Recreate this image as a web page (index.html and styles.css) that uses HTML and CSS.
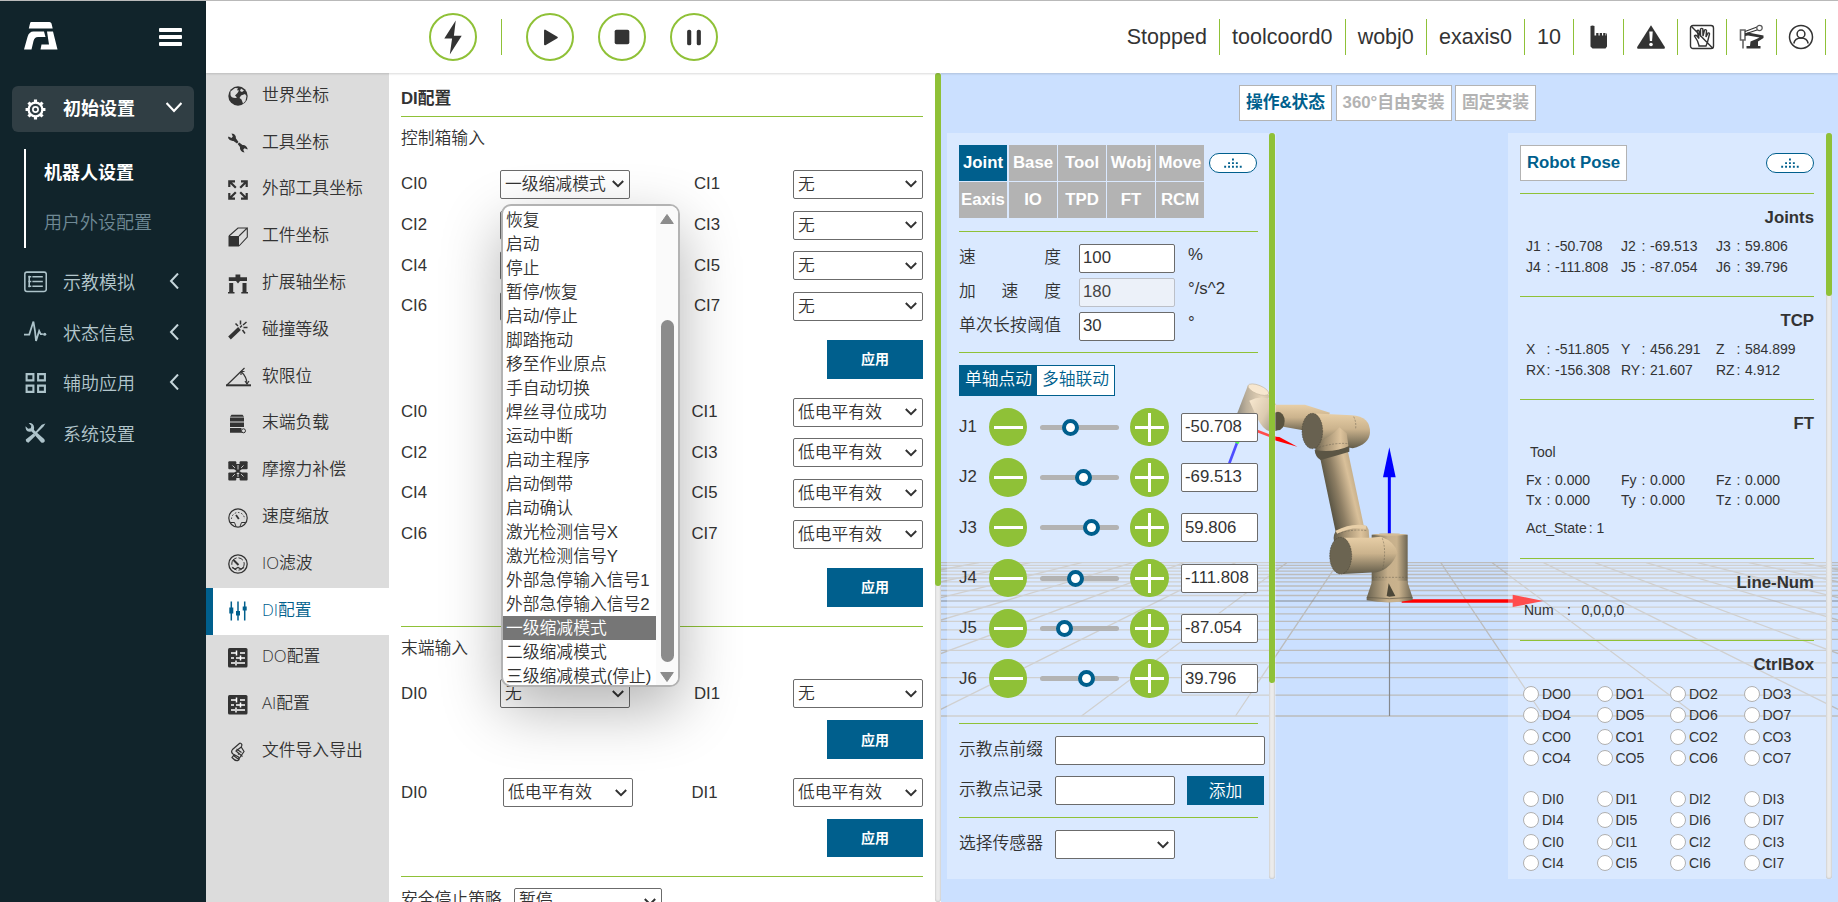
FILE: index.html
```html
<!DOCTYPE html>
<html lang="zh-CN">
<head>
<meta charset="utf-8">
<title>机器人控制</title>
<link rel="stylesheet" href="styles.css">
</head>
<body>
<div class="app">
  <aside class="sidebar">
    <div class="brand">
      <svg class="logo" viewBox="0 0 34 28"><path fill="#fff" d="M7 0h18.500q1.500 0 2 1.500l1.200 5H4.800L6 1.500Q6.200 0 7 0ZM0 27.500 3.500 15q1.500-5.500 6-5.500H20l1.500 5.500h-7.500q-3.500 0-4.500 4L7.500 27.500ZM23 9.500h6L33.500 27.500H16.500l1-5H25Z"/></svg>
      <span class="burger"><i></i><i></i><i></i></span>
    </div>
    <div class="nav-item nav-active">
      <svg class="nav-ic" viewBox="0 0 22 22" fill="none" stroke="#fff"><circle cx="11" cy="11" r="6.600" stroke-width="2.200"/><circle cx="11" cy="11" r="2.500" stroke-width="1.600"/><g stroke-width="3"><path d="M11 1.500v3M11 17.500v3M1.500 11h3M17.500 11h3M4.300 4.300l2 2M15.700 15.700l2 2M17.700 4.300l-2 2M6.300 15.700l-2 2"/></g></svg>
      <span>初始设置</span>
      <svg class="arrow" viewBox="0 0 16 16" fill="none" stroke="#fff" stroke-width="2.200"><path d="M.5 3l7.500 8L15.500 3"/></svg>
    </div>
    <div class="subnav">
      <div class="sub-on">机器人设置</div>
      <div>用户外设配置</div>
    </div>
    <div class="nav-item">
      <svg class="nav-ic" viewBox="0 0 22 22" fill="none" stroke="#adc3ca" stroke-width="1.500"><rect x="0.800" y="2" width="20.500" height="18.500" rx="2"/><path d="M4 6.500h3M8 6.500h10M4 11h3M8 11h10M4 15.500h3M8 15.500h10M5 5.500v11"/></svg>
      <span>示教模拟</span>
      <svg class="arrow" viewBox="0 0 16 16" fill="none" stroke="#c6d6db" stroke-width="2"><path d="M12 .5 5 8l7 7.500"/></svg>
    </div>
    <div class="nav-item">
      <svg class="nav-ic" viewBox="0 0 22 22" fill="none" stroke="#adc3ca" stroke-width="1.700"><path d="M0 14h5l3-9.500 1-3 1.500 9L11.500 20l3-9.500 1.500 3h2"/><circle cx="19.800" cy="13.600" r="1.500" fill="#adc3ca" stroke="none"/></svg>
      <span>状态信息</span>
      <svg class="arrow" viewBox="0 0 16 16" fill="none" stroke="#c6d6db" stroke-width="2"><path d="M12 .5 5 8l7 7.500"/></svg>
    </div>
    <div class="nav-item">
      <svg class="nav-ic" viewBox="0 0 22 22" fill="none" stroke="#adc3ca" stroke-width="2"><path d="M2.500 3h6.500v6H2.500zM13.500 3H20v6h-6.500zM2.500 14h6.500v6H2.500zM13.500 14H20v6h-6.500z"/></svg>
      <span>辅助应用</span>
      <svg class="arrow" viewBox="0 0 16 16" fill="none" stroke="#c6d6db" stroke-width="2"><path d="M12 .5 5 8l7 7.500"/></svg>
    </div>
    <div class="nav-item">
      <svg class="nav-ic" viewBox="0 0 22 22"><g fill="#adc3ca"><path d="M4.500 2 7 4.500 6.500 7 4 7.500 1.500 5Q1 9.500 5 10.300L7.300 10 16.500 20.500Q18.500 21.500 19.800 19.500 20.300 18 19 17L9.500 8.500Q10.500 3.500 6.500 2Z"/><path d="M20.500 2.500 17 3.500 10.500 11l1.200 1.200 7-7ZM9 12 1.700 17.800Q1.700 20.500 4.200 20.700L11 14Z"/></g></svg>
      <span>系统设置</span>
    </div>
  </aside>

  <div class="right">
    <header class="topbar">
      <div class="controls">
        <span class="round"><svg viewBox="0 0 48 48"><path fill="#333" d="M27 6 14.500 25.500H23L20.500 43 33.500 22.500H25Z"/></svg></span>
        <i class="vsep"></i>
        <span class="round"><svg viewBox="0 0 48 48"><path fill="#333" stroke="#333" stroke-width="2" stroke-linejoin="round" d="M18.500 17v15L31.500 24.500Z"/></svg></span>
        <span class="round"><svg viewBox="0 0 48 48"><rect x="16" y="16" width="16" height="16" rx="2" fill="#333"/></svg></span>
        <span class="round"><svg viewBox="0 0 48 48"><rect x="16.500" y="16" width="4.500" height="17" rx="2" fill="#333"/><rect x="27" y="16" width="4.500" height="17" rx="2" fill="#333"/></svg></span>
      </div>
      <div class="status">
        <span>Stopped</span><span>toolcoord0</span><span>wobj0</span><span>exaxis0</span><span>10</span>
        <span class="st-ic w1"><svg viewBox="0 0 26 26"><path fill="#333" d="M4.500 2Q6.500.8 8.500 2v9.500h1.700V9h2.300v2.500h1.200V9h2.300v2.500h1.200V9h2.300v2.500h.7V9.500h.8V22.500l-1.500 2H6.500l-2-2Z"/></svg></span>
        <span class="st-ic w2"><svg viewBox="0 0 30 26"><path fill="#333" d="M15 1.200 28.800 23q.6 1.500-.8 1.700H2Q.6 24.500 1.200 23Z"/><path fill="#fff" d="M13.300 7.500h3.400l-.6 9.500h-2.200Z"/><circle cx="15" cy="20.500" r="1.800" fill="#fff"/></svg></span>
        <span class="st-ic w3"><svg viewBox="0 0 26 26" fill="none" stroke="#333" stroke-width="1.400"><rect x="1.500" y="1.500" width="23" height="23" rx="2.500"/><path d="M2 2 24 24.500M10 21.500 8.500 17 5.500 12q1-1.500 2.500 0l2 2.500-2-7.500q1-1.500 2 0l1.500 5.500V5q1.300-1.300 2.300 0l.2 7L15.500 6q1.300-1 2 .5L17 13l2-4q1.700-.5 1.500 1L18.500 18l-1.500 4H10Z"/></svg></span>
        <span class="st-ic w3"><svg viewBox="0 0 26 26"><path d="M1.500 6H6v10H1.500zM4 16v8.500" fill="none" stroke="#666" stroke-width="1.600"/><path d="M6 7.500 18 3M6 10l12-4" fill="none" stroke="#333" stroke-width="1.200"/><circle cx="20.500" cy="4" r="2.700" fill="#fff" stroke="#555" stroke-width="1.200"/><path fill="#333" d="M6 9.500 9 8.500l15.500 3V14L19 17.500V22h2.500v2.500H7.500V22h3.500l.5-4.500 6-2.500 3-1.500L9 11.500 6 12Z"/></svg></span>
        <span class="st-ic w3"><svg viewBox="0 0 26 26" fill="none" stroke="#333" stroke-width="1.500"><circle cx="13" cy="13" r="11.500"/><circle cx="13" cy="10" r="3.900"/><path d="M5.800 19.500q1-5.500 7.200-5.500t7.200 5.500"/></svg></span>
      </div>
    </header>

    <div class="body">
      <nav class="menu">
        <div><svg viewBox="0 0 20 20"><circle cx="10" cy="10" r="9.700" fill="#333"/><path fill="#dcdcdc" d="M2.500 5.500 7 2l3 .3-1 2 2 .2-1.500 2.500L7 9.500l2 2-1.500.5Q3 12 2.500 9ZM13 9.500l4-1.500 1.500 2-1 5-2.500 2.500-1.500-4-2-1.500ZM13 2.500l3 2-2 1.500-2-1Z"/></svg><span>世界坐标</span></div>
        <div><svg viewBox="0 0 20 20"><path fill="#333" d="M3.500.5 6 1Q8.500 3 8 5.500L10.500 9 9 10.500 5.500 8Q2 8.500 0 5L.5 3.500l3 1.500 1.300-1.500ZM16.500 19.500l-2-.5Q11.500 17 12 14L9.700 11 11.200 9.500l3.300 2.500Q18 11.500 19.500 15.500v1l-3-1.300-1.300 1.500Z"/></svg><span>工具坐标</span></div>
        <div><svg viewBox="0 0 20 20" fill="none" stroke="#333" stroke-width="2.200"><path d="M1.300 7V1.300H7M13 1.300h5.700V7M18.700 13v5.700H13M7 18.700H1.300V13M1.500 1.500l6.300 6.300M18.500 1.500l-6.300 6.300M18.500 18.500l-6.300-6.300M1.500 18.500l6.300-6.300"/></svg><span>外部工具坐标</span></div>
        <div><svg viewBox="0 0 20 20"><rect x=".5" y="9" width="10.500" height="10.500" fill="#333"/><path fill="none" stroke="#333" stroke-width="1.100" d="M1 9 10 1h9.300L11 9M19.300 1v9L11 19"/></svg><span>工件坐标</span></div>
        <div><svg viewBox="0 0 20 20"><path fill="#333" d="M.8 3.200H7.500V.5h4.800V3.200H19V7H12L10 9.500 8 7H.8ZM1.200 9h4v9H6.500v1.500H0V18h1.200ZM14.500 9h4v9H20v1.500H13.300V18h1.200Z"/></svg><span>扩展轴坐标</span></div>
        <div><svg viewBox="0 0 20 20" stroke="#333" fill="none"><path stroke-width="3.800" d="M1.500 18 11.500 8.500"/><path stroke-width="1.500" d="M12 7.500l2-2M12.500.5v4M7.500 3.500l2.500 2.500M15.500 7.500h4M18.500 2 15 5M14.500 10l2.500 3.500"/></svg><span>碰撞等级</span></div>
        <div><svg class="wide" viewBox="0 0 25 20" fill="none" stroke="#333" stroke-width="1.200"><path d="M1 18 18.500 1M15 4.500Q21 10 21 17"/><path stroke-width="2" d="M0 18.300h25"/><path d="M15 8v-3.500h3.500M19 14l2 3 2-3"/></svg><span>软限位</span></div>
        <div><svg viewBox="0 0 20 20"><path fill="#333" d="M3.500.8h11l1.500 2H2ZM2 3.500h14v4H2ZM2 8.500h14v4.500H2ZM2 14h11.500v3.500H16L15 18.800H2Z"/><circle cx="15.500" cy="16.800" r="2" fill="#dcdcdc" stroke="#333"/></svg><span>末端负载</span></div>
        <div><svg viewBox="0 0 20 20"><g fill="#333"><rect width="8" height="8" x=".3" y=".3" rx="1"/><rect width="8" height="8" x="11.600" y=".3" rx="1"/><rect width="8" height="8" x=".3" y="11.600" rx="1"/><rect width="8" height="8" x="11.600" y="11.600" rx="1"/><path d="M7 3h6v5H7zM7 13h6v4H7z"/></g><path d="M4.500 4.500l11 11M15.500 4.500l-11 11M10 4v12" stroke="#dcdcdc" stroke-width=".9"/><path d="M6.500 7l7 6M13.500 7l-7 6" stroke="#333" stroke-width="2.200"/></svg><span>摩擦力补偿</span></div>
        <div><svg viewBox="0 0 20 20" fill="none" stroke="#333"><circle cx="10" cy="10" r="9.200" stroke-width="1.200"/><path stroke-dasharray="1.500 1.800" d="M3.500 11a6.500 6.500 0 0 1 13 0"/><path d="M2.500 14.500h4l1.500 4M17.500 14.500h-4l-1.500 4"/><path stroke-width="1.800" d="M8 7l2.800 4"/></svg><span>速度缩放</span></div>
        <div><svg viewBox="0 0 20 20" fill="none" stroke="#333"><circle cx="10" cy="10" r="9.200" stroke-width="1.300"/><circle cx="10" cy="10" r="6.200" stroke-dasharray="9 2 5 2"/><path stroke-width="1.200" d="M4 13.500l3 1.500 3-1.500 3 1.500 3-1.500"/><path stroke-width="2" d="M5.500 6l5 5"/></svg><span>IO滤波</span></div>
        <div class="menu-on"><svg viewBox="0 0 20 20" stroke="#005f8d" fill="none"><path stroke-width="1.500" d="M3.300.5v19M10 .5v19M16.700.5v19"/><path stroke-width="4" d="M3.300 6.500v6M10 10v4.500M16.700 5.500v4"/></svg><span>DI配置</span></div>
        <div><svg viewBox="0 0 20 20"><rect width="19.500" height="19.500" rx="1.500" fill="#333"/><path stroke="#fff" stroke-width="1.500" fill="none" d="M3 5h6M12 5h5M8.500 2.500v5M3 10h3M8 10h9M12.500 7.500v5M3 15h4M9 15h8M8 12.500v5"/></svg><span>DO配置</span></div>
        <div><svg viewBox="0 0 20 20"><rect width="19.500" height="19.500" rx="1.500" fill="#333"/><path stroke="#fff" stroke-width="1.500" fill="none" d="M3 5h6M12 5h5M8.500 2.500v5M3 10h3M8 10h9M12.500 7.500v5M3 15h4M9 15h8M8 12.500v5"/></svg><span>AI配置</span></div>
        <div><svg viewBox="0 0 20 20" fill="none" stroke="#333" stroke-width="1.200"><path d="M12 1 4.500 7.500q-2 2.500.5 4.500l5.500 3q1.500 2-.5 3.500-2.500 1-6-3l1.500-2 6 4.500M12 1q3 1 1.200 4L8 9l6.500 5.500M13.200 5 16 9.500 10.500 17.500M8.500 7l5 3.500M10 12.500l1.500-1.500"/></svg><span>文件导入导出</span></div>
      </nav>

      <main class="content">
        <h2>DI配置</h2>
        <div class="caption">控制箱输入</div>
        <div class="rows">
          <div class="row"><label>CI0</label><select><option>一级缩减模式</option></select><label>CI1</label><select><option>无</option></select></div>
          <div class="row"><label>CI2</label><select><option>无</option></select><label>CI3</label><select><option>无</option></select></div>
          <div class="row"><label>CI4</label><select><option>无</option></select><label>CI5</label><select><option>无</option></select></div>
          <div class="row"><label>CI6</label><select><option>无</option></select><label>CI7</label><select><option>无</option></select></div>
        </div>
        <button class="apply">应用</button>
        <div class="rows rows-level">
          <div class="row"><label>CI0</label><select><option>低电平有效</option></select><label>CI1</label><select><option>低电平有效</option></select></div>
          <div class="row"><label>CI2</label><select><option>低电平有效</option></select><label>CI3</label><select><option>低电平有效</option></select></div>
          <div class="row"><label>CI4</label><select><option>低电平有效</option></select><label>CI5</label><select><option>低电平有效</option></select></div>
          <div class="row"><label>CI6</label><select><option>低电平有效</option></select><label>CI7</label><select><option>低电平有效</option></select></div>
        </div>
        <button class="apply">应用</button>
        <hr>
        <div class="caption">末端输入</div>
        <div class="rows">
          <div class="row"><label>DI0</label><select><option>无</option></select><label>DI1</label><select><option>无</option></select></div>
        </div>
        <button class="apply near">应用</button>
        <div class="rows rows-level">
          <div class="row"><label>DI0</label><select><option>低电平有效</option></select><label>DI1</label><select><option>低电平有效</option></select></div>
        </div>
        <button class="apply near last">应用</button>
        <hr>
        <div class="strategy"><label>安全停止策略</label><select><option>暂停</option></select></div>
      </main>
      <div class="scroll scroll-main"><i></i></div>

      <section class="view">
        <svg class="scene" viewBox="941 73 897 829">
          <defs>
            <linearGradient id="gh" x1="0" x2="1"><stop offset="0" stop-color="#5d5848"/><stop offset=".3" stop-color="#a08e70"/><stop offset=".75" stop-color="#ddc39c"/><stop offset="1" stop-color="#bba582"/></linearGradient>
            <linearGradient id="gb" x1="0" x2="1"><stop offset="0" stop-color="#6a6350"/><stop offset=".45" stop-color="#c7b08c"/><stop offset=".7" stop-color="#c9b28d"/><stop offset="1" stop-color="#6d6552"/></linearGradient>
            <linearGradient id="gv" x1="0" y1="0" x2="0" y2="1"><stop offset="0" stop-color="#e8cfa7"/><stop offset=".45" stop-color="#cbb38d"/><stop offset="1" stop-color="#625c4a"/></linearGradient>
            <linearGradient id="gd" x1="0" y1=".1" x2="1" y2=".6"><stop offset="0" stop-color="#f3dcb8"/><stop offset=".5" stop-color="#cdb590"/><stop offset="1" stop-color="#585342"/></linearGradient>
            <linearGradient id="gu" gradientUnits="userSpaceOnUse" x1="322" y1="375" x2="412" y2="353"><stop offset="0" stop-color="#5a5544"/><stop offset=".35" stop-color="#8c7d63"/><stop offset=".8" stop-color="#d9c09a"/><stop offset="1" stop-color="#c3ac87"/></linearGradient>
          </defs>
          <g fill="none" stroke="#bcbcbc" stroke-width="1.300">
            <path d="M941 716H1838M941 695.100H1838M941 677.700H1838M941 662.900H1838M941 650.300H1838M941 639.300H1838M941 629.800H1838M941 621.300H1838M941 613.800H1838M941 607.100H1838M941 595.500H1838M941 590.500H1838M941 586H1838M941 581.800H1838M941 578H1838M941 574.500H1838M941 571.200H1838M941 568.100H1838M941 565.300H1838M941 562.700H1838"/>
            <path d="M1543.500 716 1440.800 562.700M1697.500 716 1492.200 562.700M1851.500 716 1543.500 562.700M2005.500 716 1594.800 562.700M2159.500 716 1646.200 562.700M2313.500 716 1697.500 562.700M2467.500 716 1748.800 562.700M2621.500 716 1800.200 562.700M1235.500 716 1338.200 562.700M1081.500 716 1286.800 562.700M927.500 716 1235.500 562.700M773.500 716 1184.200 562.700M619.500 716 1132.800 562.700M465.500 716 1081.500 562.700M311.500 716 1030.200 562.700M157.500 716 978.800 562.700"/>
          </g>
          <path d="M941 601H1838M1389.500 601V716" stroke="#85898f" stroke-width="1.200"/>
          <g transform="translate(1220 370) scale(.33333)">
            <path d="M545 693H880" stroke="#f00" stroke-width="10"/><path fill="#f00" d="M878 674 970 693 878 711Z"/>
            <path d="M508 500V318" stroke="#00f" stroke-width="9"/><path fill="#00f" d="M508 232 527 322H489Z"/>
            <path d="M90 175 175 207" stroke="#f00" stroke-width="8"/><path fill="#f00" d="M164 200 178 201 232 230 164 211Z"/>
            <path d="M52 216 28 280" stroke="#00f" stroke-width="8"/><path d="M58 206 50 220" stroke="#0f0" stroke-width="11"/>
            <path fill="url(#gh)" d="M84 46 50 134 115 150 150 76Z"/>
            <path fill="url(#gd)" d="M88 92Q135 70 165 100L197 150Q185 188 148 184Q128 178 112 145Z"/>
            <ellipse cx="115" cy="59" rx="33" ry="13" transform="rotate(22 115 59)" fill="#f4ddba" stroke="#b09a78" stroke-width="2"/>
            <path fill="url(#gv)" d="M150 104H255L330 128 300 190 190 170Z"/>
            <ellipse cx="174" cy="153" rx="20" ry="28" fill="#59533f"/>
            <path fill="url(#gv)" d="M272 130 395 136Q452 140 450 188Q448 222 398 235L290 215Z"/>
            <path fill="url(#gh)" d="M284 222Q335 200 358 172L380 190 387 240Q340 272 288 254Z"/>
            <ellipse cx="277" cy="183" rx="31" ry="53" fill="#686150" stroke="#413d31" stroke-width="1.500" stroke-dasharray="5 3"/>
            <path fill="url(#gu)" d="M300 262Q345 245 384 245L432 470 432 520 350 500Z"/>
            <path fill="#5b5544" d="M284 240Q340 250 388 228V245Q345 258 302 270 286 262 284 240Z"/>
            <path d="M297 232Q345 217 386 221" fill="none" stroke="#665e4c" stroke-width="1.500" stroke-dasharray="6 4"/>
            <path d="M401 140q8 15 6 35" fill="none" stroke="#665e4c" stroke-width="1.500" stroke-dasharray="6 4"/>
            <path fill="url(#gh)" d="M346 485Q395 457 440 468L446 480 450 535 350 535Q338 510 342 495Z"/>
            <path fill="none" stroke="#e8cfa8" stroke-width="10" d="M349 487Q395 463 438 472"/>
            <path d="M345 495Q390 475 440 482" fill="none" stroke="#665e4c" stroke-width="1.500" stroke-dasharray="6 4"/>
            <path fill="url(#gb)" d="M455 494Q508 487 563 494V640H455Z"/>
            <path fill="#d5bd97" d="M455 494Q508 487 563 494 508 501 455 494Z"/>
            <path fill="url(#gv)" d="M365 503H450L483 500Q525 515 532 548 515 595 470 607L368 612Z"/>
            <path d="M487 505Q500 540 488 598" fill="none" stroke="#665e4c" stroke-width="1.500" stroke-dasharray="6 4"/>
            <ellipse cx="362" cy="557" rx="33" ry="55" fill="#6b6451" stroke="#413d31" stroke-width="1.500" stroke-dasharray="5 3"/>
            <path fill="url(#gb)" d="M457 632H561L578 683V690Q508 704 440 691V683Z"/>
            <path d="M456 622H562" stroke="#665e4c" stroke-width="1.500" stroke-dasharray="6 4"/>
            <path d="M440 682Q508 690 578 682" stroke="#625b48" stroke-width="2" fill="none"/>
            <path fill="#4c4738" d="M506 640 526 678 508 680 500 678Z"/>
          </g>
        </svg>

        <div class="tabs"><b class="tab tab-on">操作&amp;状态</b><b class="tab tab-free">360°自由安装</b><b class="tab tab-fix">固定安装</b></div>

        <div class="panels">
          <div class="panel joint">
            <div class="joint-body">
              <div class="modes">
                <div class="mode-grid">
                  <b class="on">Joint</b><b>Base</b><b>Tool</b><b>Wobj</b><b>Move</b>
                  <b>Eaxis</b><b>IO</b><b>TPD</b><b>FT</b><b>RCM</b>
                </div>
                <span class="pill"><svg viewBox="0 0 18 10"><path stroke="#005f8d" stroke-width="1.900" stroke-dasharray="1.900 2" d="M.2 8.800H18M4.100 5.100H14M8 1.500h1.900"/></svg></span>
              </div>
              <hr>
              <div class="params">
                <label>速度</label><input value="100"><span>%</span>
                <label>加速度</label><input value="180" disabled><span>°/s^2</span>
                <label>单次长按阈值</label><input value="30"><span>°</span>
              </div>
              <hr class="hr2">
              <div class="seg"><span class="seg-on">单轴点动</span><span>多轴联动</span></div>
              <div class="joints">
                <div class="j"><label>J1</label><i class="minus"></i><span class="track"><i style="left:30.500px"></i></span><i class="plus"></i><input value="-50.708"></div>
                <div class="j"><label>J2</label><i class="minus"></i><span class="track"><i style="left:43.300px"></i></span><i class="plus"></i><input value="-69.513"></div>
                <div class="j"><label>J3</label><i class="minus"></i><span class="track"><i style="left:51.500px"></i></span><i class="plus"></i><input value="59.806"></div>
                <div class="j"><label>J4</label><i class="minus"></i><span class="track"><i style="left:35.300px"></i></span><i class="plus"></i><input value="-111.808"></div>
                <div class="j"><label>J5</label><i class="minus"></i><span class="track"><i style="left:24.500px"></i></span><i class="plus"></i><input value="-87.054"></div>
                <div class="j"><label>J6</label><i class="minus"></i><span class="track"><i style="left:46.500px"></i></span><i class="plus"></i><input value="39.796"></div>
              </div>
              <hr class="hr3">
              <div class="teach"><label>示教点前缀</label><input class="long"></div>
              <div class="teach teach2"><label>示教点记录</label><input><button class="add">添加</button></div>
              <hr class="hr4">
              <div class="teach"><label>选择传感器</label><select><option></option></select></div>
            </div>
            <div class="scroll scroll-joint"><i></i></div>
          </div>

          <div class="panel pose">
            <div class="pose-body">
              <div class="pose-head"><b class="pose-btn">Robot Pose</b><span class="pill"><svg viewBox="0 0 18 10"><path stroke="#005f8d" stroke-width="1.900" stroke-dasharray="1.900 2" d="M.2 8.800H18M4.100 5.100H14M8 1.500h1.900"/></svg></span></div>
              <section class="blk">
                <h3>Joints</h3>
                <div class="vals"><i>J1</i><i>:</i><i>-50.708</i><i>J2</i><i>:</i><i>-69.513</i><i>J3</i><i>:</i><i>59.806</i><i>J4</i><i>:</i><i>-111.808</i><i>J5</i><i>:</i><i>-87.054</i><i>J6</i><i>:</i><i>39.796</i></div>
              </section>
              <section class="blk">
                <h3>TCP</h3>
                <div class="vals"><i>X</i><i>:</i><i>-511.805</i><i>Y</i><i>:</i><i>456.291</i><i>Z</i><i>:</i><i>584.899</i><i>RX</i><i>:</i><i>-156.308</i><i>RY</i><i>:</i><i>21.607</i><i>RZ</i><i>:</i><i>4.912</i></div>
              </section>
              <section class="blk blk-ft">
                <h3>FT</h3>
                <div class="tool">Tool</div>
                <div class="vals"><i>Fx</i><i>:</i><i>0.000</i><i>Fy</i><i>:</i><i>0.000</i><i>Fz</i><i>:</i><i>0.000</i><i>Tx</i><i>:</i><i>0.000</i><i>Ty</i><i>:</i><i>0.000</i><i>Tz</i><i>:</i><i>0.000</i></div>
                <div class="act">Act_State<span>:</span>1</div>
              </section>
              <section class="blk blk-line">
                <h3>Line-Num</h3>
                <div class="num"><i>Num</i><i>:</i><i>0,0,0,0</i></div>
              </section>
              <section class="blk blk-box">
                <h3>CtrlBox</h3>
                <div class="leds">
                  <span>DO0</span><span>DO1</span><span>DO2</span><span>DO3</span>
                  <span>DO4</span><span>DO5</span><span>DO6</span><span>DO7</span>
                  <span>CO0</span><span>CO1</span><span>CO2</span><span>CO3</span>
                  <span>CO4</span><span>CO5</span><span>CO6</span><span>CO7</span>
                </div>
                <div class="leds">
                  <span>DI0</span><span>DI1</span><span>DI2</span><span>DI3</span>
                  <span>DI4</span><span>DI5</span><span>DI6</span><span>DI7</span>
                  <span>CI0</span><span>CI1</span><span>CI2</span><span>CI3</span>
                  <span>CI4</span><span>CI5</span><span>CI6</span><span>CI7</span>
                </div>
              </section>
            </div>
            <div class="scroll scroll-pose"><i></i></div>
          </div>
        </div>
      </section>
    </div>
  </div>

  <div class="popup">
    <div class="popup-list">
      <div>恢复</div><div>启动</div><div>停止</div><div>暂停/恢复</div><div>启动/停止</div><div>脚踏拖动</div><div>移至作业原点</div><div>手自动切换</div><div>焊丝寻位成功</div><div>运动中断</div><div>启动主程序</div><div>启动倒带</div><div>启动确认</div><div>激光检测信号X</div><div>激光检测信号Y</div><div>外部急停输入信号1</div><div>外部急停输入信号2</div><div class="opt-on">一级缩减模式</div><div>二级缩减模式</div><div>三级缩减模式(停止)</div>
    </div>
    <div class="popup-bar">
      <svg viewBox="0 0 14 10"><path fill="#8c8c8c" stroke="#8c8c8c" stroke-linejoin="round" d="M7 .5 13.300 9.500H.7Z"/></svg>
      <i></i>
      <svg viewBox="0 0 14 10"><path fill="#8c8c8c" stroke="#8c8c8c" stroke-linejoin="round" d="M7 9.500 13.300 .5H.7Z"/></svg>
    </div>
  </div>
</div>
</body>
</html>
```
FILE: styles.css
```css
* { box-sizing: border-box; }
html, body { margin: 0; height: 902px; overflow: hidden; }
body {
  font-family: "Liberation Sans", "Noto Sans CJK SC", sans-serif;
  font-size: 16.8px;
  font-weight: 350;
  color: #333;
  background: #fff;
}
i { font-style: normal; }
hr { border: 0; border-top: 1px solid #8fc137; margin: 0; }
input, select, button { font-family: inherit; font-size: 16.8px; font-weight: inherit; color: #333; margin: 0; }
select {
  appearance: none;
  height: 29px;
  width: 130px;
  border: 1px solid #6b6b6b;
  border-radius: 2px;
  padding: 0 0 0 4px;
  background: #fff url("data:image/svg+xml,%3Csvg xmlns='http://www.w3.org/2000/svg' width='12' height='8' fill='none' stroke='%23333' stroke-width='2'%3E%3Cpath d='M.8 1 6 6.200 11.200 1'/%3E%3C/svg%3E") no-repeat right 5px center;
}
input { height: 29px; border: 1px solid #6b6b6b; border-radius: 2px; padding: 1px 3px; }

.app { position: relative; display: flex; height: 902px; border-top: 1px solid #bbb; }

/* Sidebar */
.sidebar { width: 206px; flex: none; background: #11242b; padding: 0 12px; font-size: 18px; color: #b3c6cc; }
.brand { height: 85px; display: flex; justify-content: space-between; align-items: flex-start; padding: 21px 12px 0; }
.logo { width: 34px; height: 28px; }
.burger { width: 23px; margin-top: 6px; display: grid; gap: 3px; }
.burger i { height: 4px; border-radius: 1px; background: #fff; }
.nav-item { height: 50.500px; display: flex; align-items: center; padding: 0 12px; }
.nav-item span { margin-left: 16px; flex: 1; }
.nav-ic { width: 23px; height: 23px; }
.arrow { width: 16px; height: 16px; }
.nav-active { height: 46px; border-radius: 6px; background: #303e44; color: #fff; font-weight: bold; }
.nav-active span { padding-bottom: 4px; }
.nav-active .arrow { margin-bottom: 2px; }
.subnav { margin: 17px 0 8px 12px; height: 99px; border-left: 2px solid #fff; padding-left: 18px; color: #6f8995; display: flex; flex-direction: column; }
.subnav div { height: 49.500px; line-height: 49px; }
.subnav .sub-on { color: #fff; font-weight: bold; }

/* Top bar */
.right { flex: 1; display: flex; flex-direction: column; min-width: 0; }
.topbar { height: 72px; flex: none; display: flex; justify-content: space-between; align-items: center; padding: 0 12px 0 223px; box-shadow: 0 1px 2px rgba(0,0,0,.15); position: relative; z-index: 1; background: #fff; }
.controls { display: flex; align-items: center; gap: 24px; }
.round { width: 48px; height: 48px; border: 2px solid #8fc137; border-radius: 50%; }
.round svg { display: block; width: 44px; height: 44px; }
.vsep { width: 1px; height: 36px; background: #8fc137; }
.status { display: flex; font-size: 21.500px; line-height: 36px; }
.status > span { padding: 0 12.100px; height: 36px; border-right: 1.500px solid #8fc137; white-space: nowrap; }
.status > .st-ic { padding: 0; display: flex; align-items: center; justify-content: center; }
.st-ic svg { height: 26px; }
.status > .w1 { width: 50px; }
.status > .w2 { width: 54px; }
.status > .w3 { width: 49.300px; }

/* Second level menu */
.body { flex: 1; display: flex; min-height: 0; }
.menu { width: 183px; flex: none; background: #dcdcdc; font-family: "Open Sans", "Noto Sans CJK SC", sans-serif; }
.menu div { height: 46.800px; display: flex; align-items: center; padding: 0 0 3px 22px; }
.menu svg { width: 20px; height: 20px; margin-top: 3px; }
.menu svg.wide { width: 25px; margin: 3px -3px 0 -2px; }
.menu span { margin: -2px 0 0 14px; }
.menu .menu-on { background: #fff; border-left: 7px solid #005f8d; padding-left: 15px; color: #005f8d; }

/* Configuration column */
.content { width: 546px; flex: none; padding: 0 12px; overflow: hidden; }
.content h2 { margin: 0; width: 522px; height: 44px; padding-top: 7px; line-height: 38px; font-size: 16.800px; border-bottom: 1px solid #8fc137; }
.content hr { margin-top: 19px; width: 522px; }
.caption { height: 47px; line-height: 44px; }
.row { height: 40.700px; width: 522px; display: grid; grid-template-columns: 99px 194px 99px 130px; align-items: center; }
.rows { margin-bottom: 13px; }
.rows-level { margin-top: 13px; }
.rows-level .row { grid-template-columns: 102px 188.500px 101.500px 130px; }
.apply { display: block; width: 96px; height: 39px; margin: 0 0 0 426px; border: 0; padding: 0 0 2px; background: #005f8d; color: #fff; font-size: 14px; font-weight: bold; }
.apply.near { margin-top: -7px; }
.apply.last { height: 38px; }
.strategy { display: flex; padding-top: 11px; }
.strategy label { width: 113px; line-height: 24px; }
.strategy select { width: 148px; padding-bottom: 3px; }

.scroll { width: 6px; flex: none; border-radius: 3px; background: #ebebeb; box-shadow: inset 0 0 2px rgba(0,0,0,.3); }
.scroll i { display: block; border-radius: 3px; background: #8fc137; }
.scroll-main i { height: 513px; }
.scroll-joint i { height: 550px; }
.scroll-pose i { height: 163px; }

/* Robot view */
.view { position: relative; flex: 1; background: #cbe0ff; overflow: hidden; min-width: 0; }
.scene { position: absolute; left: 0; top: 0; width: 897px; height: 829px; }
.tabs { position: relative; display: flex; gap: 3.500px; padding: 12px 0 0 298px; }
.tab { width: 93px; height: 36px; line-height: 34px; text-align: center; border: 1px solid #b3b3b3; background: #fff; color: #b3b3b3; white-space: nowrap; }
.tab-on { color: #005f8d; }
.tab-free { width: 116px; }
.tab-fix { width: 81px; }
.panels { position: relative; display: flex; justify-content: space-between; padding: 12px 6px 0; height: 758px; }
.panel { display: flex; justify-content: space-between; background: rgba(255,255,255,.3); }
.joint { width: 329px; padding-right: 1px; }
.joint-body { width: 299px; margin-left: 12px; padding-top: 12px; flex: none; }
.modes { display: flex; }
.mode-grid { display: grid; grid-template-columns: 49px repeat(4, 48px); gap: 1px; }
.mode-grid b { width: 48px; height: 36px; line-height: 36px; background: #b3b3b3; color: #fff; text-align: center; white-space: nowrap; }
.mode-grid .on { background: #005f8d; }
.pill { width: 48px; height: 19.500px; border: 1.500px solid #005f8d; border-radius: 10px; background: #fff; display: flex; align-items: center; justify-content: center; }
.pill svg { width: 18px; height: 10px; }
.modes .pill { margin: 8px 0 0 5px; }
.modes + hr { margin-top: 13px; }
.params { display: grid; grid-template-columns: 102px 96px 90px; column-gap: 17px; grid-template-rows: repeat(3, 34px); margin-top: 9px; align-items: center; }
.params label { text-align: justify; text-align-last: justify; line-height: 30px; }
.params label { text-justify: inter-character; }
.params input { width: 96px; margin-left: 1px; }
.params input:disabled { background: #ecf1f9; border-color: #bcc0c8; color: #444; }
.params span { margin: -6px 0 0 -3px; }
.hr2 { margin-top: 9px; }
.seg { margin-top: 12px; width: 156px; height: 31px; border: 1px solid #005f8d; background: #fff; display: flex; color: #005f8d; line-height: 28px; text-align: center; }
.seg span { flex: 1; }
.seg .seg-on { background: #005f8d; color: #fff; }
.joints { margin-top: 6px; }
.j { height: 50.300px; display: flex; align-items: center; }
.j label { width: 30px; }
.j .minus, .j .plus { width: 38.500px; height: 38.500px; border-radius: 50%; flex: none; background: linear-gradient(#fff,#fff) center/29px 3px no-repeat #8fc137; }
.j .plus { background: linear-gradient(#fff,#fff) center/29px 3px no-repeat, linear-gradient(#fff,#fff) center/3px 29px no-repeat #8fc137; margin-right: 12.500px; }
.track { position: relative; width: 79px; height: 5px; margin: 0 11.500px 0 12.500px; border-radius: 3px; background: #b3b3b3; }
.track i { position: absolute; top: -6px; width: 17px; height: 17px; margin-left: -8.500px; border: 4px solid #005f8d; border-radius: 50%; background: #fff; }
.j input { width: 77px; }
.hr3 { margin-top: 19.500px; }
.teach { display: flex; height: 29px; margin-top: 12px; }
.teach label { width: 96px; flex: none; line-height: 27px; }
.teach input, .teach select { width: 120px; }
.teach .long { width: 210px; flex: none; }
.teach2 { margin-top: 11px; }
.add { width: 77px; flex: none; margin-left: 12px; border: 0; background: #005f8d; color: #fff; padding: 0 0 2px; }
.hr4 { margin-top: 12px; }

.pose { width: 324px; }
.pose-body { width: 294px; margin-left: 12px; padding-top: 12px; flex: none; }
.pose-head { display: flex; justify-content: space-between; height: 48px; }
.pose-head .pill { margin-top: 8px; }
.pose-btn { width: 107px; height: 36px; line-height: 34px; border: 1px solid #b3b3b3; background: #fff; color: #005f8d; text-align: center; }
.blk { height: 103px; border-top: 1px solid #8fc137; padding-top: 14px; font-size: 14px; }
.blk h3 { margin: 0; font-size: 16.800px; line-height: 20px; text-align: right; }
.vals { display: grid; grid-template-columns: 20.500px 8.500px 66px 20.500px 8.500px 66px 20.500px 8.500px 66px; padding-left: 6px; margin-top: 8px; line-height: 21px; white-space: nowrap; width: 294px; }
.blk-ft { height: 158.500px; }
.tool { margin: 8px 0 0 10px; line-height: 20px; }
.blk-ft .vals { margin-top: 8px; line-height: 20px; }
.act { margin: 8px 0 0 6px; line-height: 20px; }
.act span { display: inline-block; margin: 0 4px 0 2px; }
.blk-line { height: 82px; }
.num { display: grid; grid-template-columns: 43px 14.500px auto; padding-left: 4px; margin-top: 7px; line-height: 20px; }
.leds { display: grid; grid-template-columns: repeat(4, 73.500px); padding-left: 3px; margin-top: 8.500px; margin-bottom: 19px; grid-auto-rows: 21.500px; align-items: center; }
.leds span { display: flex; align-items: center; }
.leds span::before { content: ""; width: 14px; height: 14px; margin-right: 3px; border: 1px solid #b0b0b0; border-radius: 50%; background: #fff; }

/* Open option list */
.popup { position: absolute; z-index: 2; left: 501px; top: 203px; width: 179px; height: 483px; border: 2px solid #b3b3b3; border-radius: 10px; background: #fff; overflow: hidden; display: flex; box-shadow: 0 22px 60px rgba(0,0,0,.3); }
.popup-list { width: 153px; flex: none; padding-top: 2px; white-space: nowrap; }
.popup-list div { height: 24px; line-height: 25px; padding-left: 3px; }
.popup-list .opt-on { background: #767676; color: #fff; }
.popup-bar { flex: 1; background: #fafafa; display: flex; flex-direction: column; align-items: center; justify-content: space-between; padding: 8px 0 3px; }
.popup-bar svg { width: 14px; height: 10px; }
.popup-bar i { width: 13px; height: 342px; margin-top: 86px; border-radius: 7px; background: #8c8c8c; }
```
